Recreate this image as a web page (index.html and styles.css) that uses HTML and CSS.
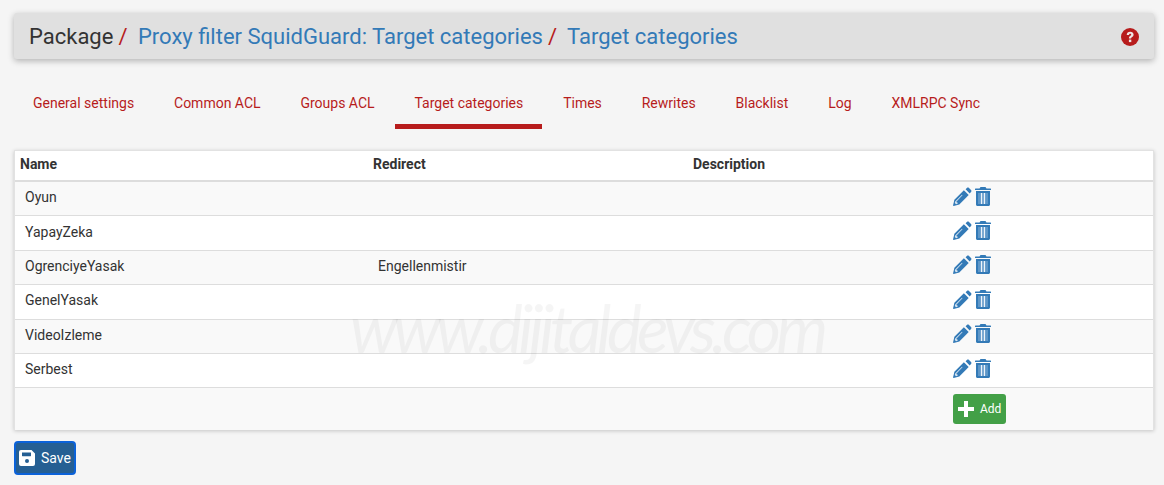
FILE: index.html
```html
<!DOCTYPE html>
<html lang="en">
<head>
<meta charset="utf-8">
<title>Target categories</title>
<link rel="stylesheet" href="styles.css">
</head>
<body>
<header class="crumbs">
  <h1 class="crumb-title">
    <span>Package</span><span class="sep">/</span>
    <a class="crumb-link">Proxy filter SquidGuard: Target categories</a><span class="sep">/</span>
    <a class="crumb-link">Target categories</a>
  </h1>
  <svg class="help" viewBox="0 0 18 18" aria-hidden="true">
    <circle cx="9" cy="9" r="9" fill="#b71c1c"/>
    <path d="M5.700 6.900C5.800 4.900 7.200 3.700 9.200 3.700c2 0 3.400 1.200 3.400 2.900 0 1.400-.9 2.100-1.700 2.600-.6.4-.8.7-.8 1.300H7.900c0-1.500.6-2.100 1.400-2.700.6-.4.9-.7.9-1.100 0-.5-.4-.9-1-.9-.7 0-1.100.5-1.200 1.200z" fill="#eee6e6"/>
    <rect x="7.900" y="11.600" width="2.400" height="2.500" fill="#eee6e6"/>
  </svg>
</header>

<nav class="tabs">
  <a class="tab">General settings</a>
  <a class="tab">Common ACL</a>
  <a class="tab">Groups ACL</a>
  <a class="tab active">Target categories</a>
  <a class="tab">Times</a>
  <a class="tab">Rewrites</a>
  <a class="tab">Blacklist</a>
  <a class="tab">Log</a>
  <a class="tab">XMLRPC Sync</a>
</nav>

<svg width="0" height="0" class="defs" aria-hidden="true">
  <symbol id="pencil" viewBox="0 0 19 19">
    <path d="M13.900 1c.6-.6 1.500-.6 2.100 0l2 2c.6.600.6 1.500 0 2.100l-1.300 1.300-4.100-4.100z" fill="#337ab7"/>
    <path d="M10.900 3.300l4.800 4.800L6.300 17.600.6 19 0 18.400 1.400 12.700z" fill="#337ab7"/>
    <path d="M2.200 14.500l6.800-6.800.5.500-6.400 6.900 1.400.3.200 1.300-1.700.5-1.200-1.200z" fill="#d5e4f1"/>
  </symbol>
  <symbol id="trash" viewBox="0 0 16 19">
    <path d="M5.500 0h5l1 1.500H15.500c.3 0 .5.200.5.500v1H0V2c0-.3.200-.5.500-.5h4zM1 4h14v13.500c0 .8-.7 1.500-1.500 1.500h-11C1.700 19 1 18.300 1 17.500z" fill="#337ab7"/>
    <path d="M3 6h10v11H3z" fill="#5f97c8"/>
    <path d="M5.900 6h1.300v11H5.900zM8.800 6h1.300v11H8.800z" fill="#eef4fa"/>
  </symbol>
</svg>

<main class="panel">
  <table class="grid">
    <thead>
      <tr><th class="c1">Name</th><th class="c2">Redirect</th><th class="c3">Description</th><th></th></tr>
    </thead>
    <tbody>
      <tr><td>Oyun</td><td></td><td></td><td class="acts"><svg class="i-pen"><use href="#pencil"/></svg><svg class="i-trash"><use href="#trash"/></svg></td></tr>
      <tr><td>YapayZeka</td><td></td><td></td><td class="acts"><svg class="i-pen"><use href="#pencil"/></svg><svg class="i-trash"><use href="#trash"/></svg></td></tr>
      <tr><td>OgrenciyeYasak</td><td>Engellenmistir</td><td></td><td class="acts"><svg class="i-pen"><use href="#pencil"/></svg><svg class="i-trash"><use href="#trash"/></svg></td></tr>
      <tr><td>GenelYasak</td><td></td><td></td><td class="acts"><svg class="i-pen"><use href="#pencil"/></svg><svg class="i-trash"><use href="#trash"/></svg></td></tr>
      <tr><td>VideoIzleme</td><td></td><td></td><td class="acts"><svg class="i-pen"><use href="#pencil"/></svg><svg class="i-trash"><use href="#trash"/></svg></td></tr>
      <tr><td>Serbest</td><td></td><td></td><td class="acts"><svg class="i-pen"><use href="#pencil"/></svg><svg class="i-trash"><use href="#trash"/></svg></td></tr>
      <tr class="add-row"><td></td><td></td><td></td><td class="acts">
        <a class="btn-add"><svg class="plus" viewBox="0 0 16 16" aria-hidden="true"><path d="M6 0h4v6h6v4h-6v6H6v-6H0V6h6z" fill="#fff"/></svg>Add</a>
      </td></tr>
    </tbody>
  </table>
  <div class="watermark">www.dijitaldevs.com</div>
</main>

<button class="btn-save" type="button">
  <svg class="disk" viewBox="0 0 16 16" aria-hidden="true"><path d="M2 0h10.500L16 3.500V14a2 2 0 0 1-2 2H2a2 2 0 0 1-2-2V2a2 2 0 0 1 2-2zm1 2.500v3.300c0 .2.200.4.400.4h8.200c.2 0 .4-.2.400-.4V2.500z" fill="#fff" fill-rule="evenodd"/><circle cx="8" cy="11" r="2" fill="#255f93"/></svg>Save
</button>
</body>
</html>
```
FILE: styles.css
```css
html, body { margin: 0; padding: 0; }
body {
  background: #f5f5f5;
  color: #333;
  font-family: Roboto, "Liberation Sans", sans-serif;
  font-size: 14px;
  height: 485px;
  overflow: hidden;
  padding: 13px 10px 0 14px;
  box-sizing: border-box;
}
.defs { position: absolute; }

.crumbs {
  height: 46px;
  background: #e0e0e0;
  border-radius: 3px;
  box-shadow: 0 2px 6px rgba(0,0,0,.28);
  display: flex;
  align-items: center;
  justify-content: space-between;
  padding: 2px 15px 0 15px;
  box-sizing: border-box;
}
.crumb-title {
  margin: 0;
  font-size: 22px;
  font-weight: 400;
  color: #333;
  line-height: 44px;
  white-space: nowrap;
}
.crumb-link { color: #337ab7; }
.sep { color: #b71c1c; margin: 0 5px; }
.help { width: 18px; height: 18px; display: block; }

.tabs {
  display: flex;
  gap: 1.9px;
  margin-top: 26px;
  height: 44px;
}
.tab {
  color: #b71c1c;
  font-size: 14px;
  line-height: 36px;
  padding: 0 19px;
  height: 39px;
}
.tab.active { border-bottom: 5px solid #b71c1c; }

.panel {
  position: relative;
  margin-top: 21px;
  background: #fff;
  box-shadow: 0 1px 4px rgba(0,0,0,.2);
  border: 1px solid #e2e2e2;
  border-bottom: 0;
}
.grid {
  width: 100%;
  border-collapse: collapse;
  table-layout: fixed;
  font-size: 14px;
}
.grid th {
  text-align: left;
  font-weight: 700;
  padding: 0 5px 3px;
  height: 26px;
  border-bottom: 2px solid #ddd;
}
.c1 { width: 343px; }
.c2 { width: 310px; }
.c3 { width: 245px; }
.grid td {
  padding: 0 10px 3px;
  height: 30.4px;
  border-bottom: 1px solid #ddd;
  box-sizing: content-box;
}
.grid td.acts { padding-bottom: 5px; height: 28.4px; }
.grid tbody tr:nth-child(odd) { background: #f9f9f9; }
.grid tbody tr:last-child td { border-bottom: 0; height: 41px; padding-bottom: 1px; }
.acts { font-size: 0; vertical-align: middle; }
.i-pen { width: 19px; height: 19px; }
.i-trash { width: 16px; height: 19px; margin-left: 3px; }

.btn-add {
  display: inline-flex;
  align-items: center;
  background: #43a047;
  color: #fff;
  font-size: 12px;
  font-weight: 400;
  height: 30px;
  width: 53px;
  box-sizing: border-box;
  padding-left: 5px;
  border-radius: 3px;
}
.plus { width: 16px; height: 16px; margin-right: 6px; }

.watermark {
  position: absolute;
  left: 335px;
  top: 137px;
  font-family: Lato, sans-serif;
  font-style: italic;
  font-weight: 400;
  font-size: 66px;
  letter-spacing: -4.7px;
  color: rgba(0,0,0,.04);
  white-space: nowrap;
  pointer-events: none;
}

.btn-save {
  display: flex;
  align-items: center;
  margin-top: 11px;
  width: 62px;
  height: 34px;
  padding: 0 0 0 3px;
  background: #255f93;
  border: 2px solid #0b62d9;
  border-radius: 4px;
  color: #fff;
  font-family: inherit;
  font-size: 14px;
  font-weight: 400;
}
.disk { width: 16px; height: 16px; margin-right: 6px; }
```
